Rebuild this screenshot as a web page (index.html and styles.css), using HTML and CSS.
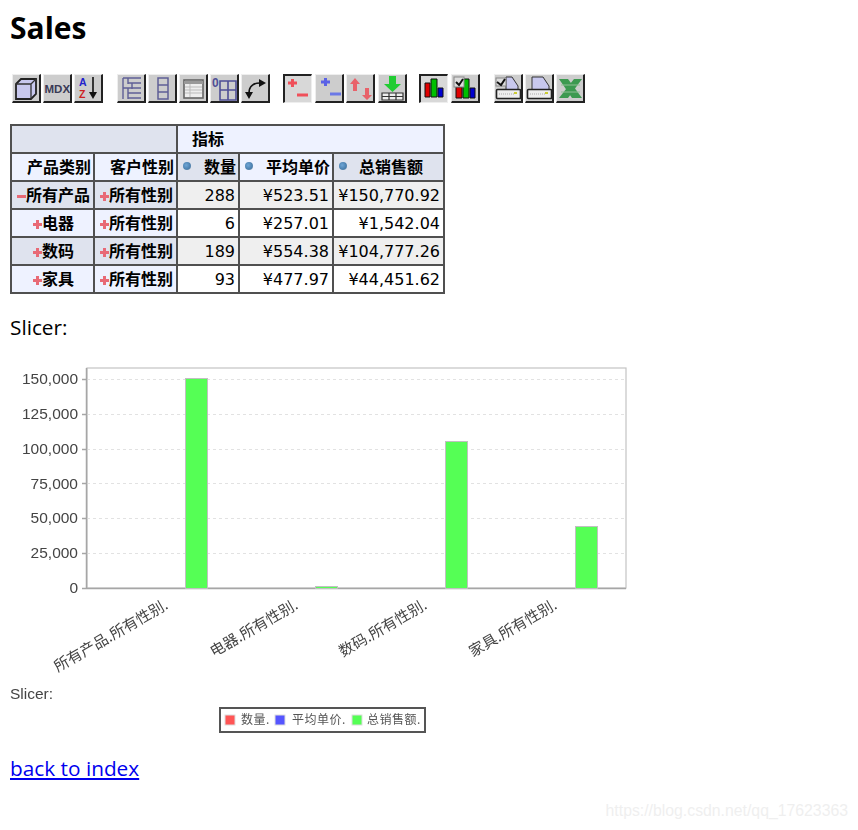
FILE: index.html
```html
<!DOCTYPE html>
<html lang="en">
<head>
    <meta charset="UTF-8">
    <title>Sales</title>
    <link rel="stylesheet" href="styles.css">
</head>
<body>
    <h1 class="title">Sales</h1>

    <!-- Toolbar -->
    <div class="toolbar">
        <div class="tool-group">
            <div class="tool"><svg viewBox="1 1 26 26"><path d="M4 10 9 5H24V20L19 25H4Z" fill="#c8c8ee" stroke="#222" stroke-width="1.8"/><path d="M4 10H19V25M19 10 24 5" fill="none" stroke="#333" stroke-width="1.3"/></svg></div>
            <div class="tool"><svg viewBox="1 1 26 26"><text class="tool-mdx" x="1.500" y="18.500">MDX</text></svg></div>
            <div class="tool"><svg viewBox="1 1 26 26"><text class="tool-az az-a" x="5" y="12">A</text><text class="tool-az az-z" x="5" y="24">Z</text><path d="M19 3V20" stroke="#111" stroke-width="1.6"/><path d="M15 18H23L19 25Z" fill="#111"/></svg></div>
        </div>
        <div class="tool-group step-right">
            <div class="tool"><svg viewBox="1 1 26 26"><path d="M6 4V25M6 4H24M11 4V10M11 9H24M15 9V15M15 14H24M6 14H15M11 14V25M11 19H24M11 24H24" fill="none" stroke="#5f5f96" stroke-width="1.4"/></svg></div>
            <div class="tool"><svg viewBox="1 1 26 26"><path d="M10 4H20V25H10ZM10 11H20M10 18H20" fill="none" stroke="#5f5f96" stroke-width="1.5"/></svg></div>
            <div class="tool"><svg viewBox="1 1 26 26"><rect x="5" y="6" width="19" height="18" fill="#eee" stroke="#666" stroke-width="1.6"/><path d="M5 7H24V10H5Z" fill="#999"/><path d="M6 13H23M6 16H23M6 19H23M11 10V23" stroke="#bbb"/></svg></div>
            <div class="tool"><svg viewBox="1 1 26 26"><text class="tool-zero" x="2" y="13">0</text><path d="M10 7H26V26H10ZM10 16H26M18 7V26" fill="none" stroke="#4f4f96" stroke-width="1.6"/></svg></div>
            <div class="tool"><svg viewBox="1 1 26 26"><path d="M8 19C8 12 13 9 19 9" fill="none" stroke="#111" stroke-width="1.7"/><path d="M18 5 25 9 18 13ZM4 18H12L8 25Z" fill="#111"/></svg></div>
        </div>
        <div class="tool-group loose">
            <div class="tool pressed"><svg viewBox="2 2 26 26"><path d="M5 9H14M9.500 5V13" stroke="#f0505a" stroke-width="3"/><path d="M14 21H25" stroke="#f0505a" stroke-width="3"/></svg></div>
            <div class="tool"><svg viewBox="1 1 26 26"><path d="M6 8H15M10.500 4V12" stroke="#5a62e6" stroke-width="3"/><path d="M15 20H26" stroke="#6a78e6" stroke-width="3"/></svg></div>
            <div class="tool"><svg viewBox="1 1 26 26"><path d="M9 4 14 10H11V17H7V10H4Z" fill="#e8626a"/><path d="M19 14H23V21H26L21 26 16 21H19Z" fill="#e8626a"/></svg></div>
            <div class="tool"><svg viewBox="1 1 26 26"><path d="M11 2H18V10H23L14.500 18 6 10H11Z" fill="#22cc33"/><path d="M4 19H25V26H4ZM4 22.500H25M11 19V26M18 19V26" fill="#eee" stroke="#333" stroke-width="1.2"/></svg></div>
        </div>
        <div class="tool-group charts">
            <div class="tool pressed"><svg viewBox="2 2 26 26"><path d="M6 9H11V23H6Z" fill="#e00000" stroke="#111"/><path d="M12 5H18V23H12Z" fill="#00c000" stroke="#111"/><path d="M19 14H24V23H19Z" fill="#0000d0" stroke="#111"/></svg></div>
            <div class="tool"><svg viewBox="1 1 26 26"><path d="M5 13H11V24H5Z" fill="#e00000" stroke="#111"/><path d="M12 5H18V24H12Z" fill="#00c000" stroke="#111"/><path d="M19 14H24V24H19Z" fill="#0000d0" stroke="#111"/><rect x="3" y="3" width="10" height="10" fill="#ddd" stroke="#888"/><path d="M5 8 8 11 12 5" fill="none" stroke="#111" stroke-width="2"/></svg></div>
        </div>
        <div class="tool-group step-right">
            <div class="tool"><svg viewBox="1 1 26 26"><path d="M12 3H18L24 12V19H12Z" fill="#c8c8ee" stroke="#333"/><rect x="2" y="4" width="10" height="8" fill="#ddd" stroke="#888"/><path d="M3 8 7 11 11 5" fill="none" stroke="#111" stroke-width="2"/><rect x="2.500" y="15.500" width="24" height="9" rx="1" fill="#eee" stroke="#222" stroke-width="1.6"/><path d="M5 20H20" stroke="#aaa" stroke-dasharray="1 1"/><rect x="20" y="18" width="3" height="2" fill="#cc3"/></svg></div>
            <div class="tool"><svg viewBox="1 1 26 26"><path d="M7 3H18L24 12V19H7Z" fill="#c8c8ee" stroke="#333"/><rect x="2.500" y="15.500" width="24" height="9" rx="1" fill="#eee" stroke="#222" stroke-width="1.6"/><path d="M5 20H20" stroke="#aaa" stroke-dasharray="1 1"/><rect x="20" y="18" width="3" height="2" fill="#cc3"/></svg></div>
            <div class="tool"><svg viewBox="1 1 26 26"><path d="M3 5H12L26 24H16Z" fill="#3c9a50"/><path d="M26 5H18L3 24H12Z" fill="#3c9a50"/><path d="M5 11H24M5 18H24" stroke="#8fbf95"/></svg></div>
        </div>
    </div>

    <!-- Pivot table -->
    <table class="pivot">
        <colgroup>
            <col class="col-category">
            <col class="col-gender">
            <col class="col-qty">
            <col class="col-price">
            <col class="col-total">
        </colgroup>
        <tr>
            <th class="corner" colspan="2"></th>
            <th class="measures" colspan="3">指标</th>
        </tr>
        <tr>
            <th class="dim-head">产品类别</th>
            <th class="dim-head">客户性别</th>
            <th class="measure odd"><div class="measure-inner"><span class="bullet"></span>数量</div></th>
            <th class="measure"><div class="measure-inner"><span class="bullet"></span>平均单价</div></th>
            <th class="measure odd"><div class="measure-inner wide"><span class="bullet"></span>总销售额</div></th>
        </tr>
        <tr class="row-odd">
            <th class="member"><span class="minus"></span>所有产品</th>
            <th class="member"><span class="plus"></span>所有性别</th>
            <td>288</td>
            <td>¥523.51</td>
            <td>¥150,770.92</td>
        </tr>
        <tr class="row-even">
            <th class="member"><span class="plus"></span>电器</th>
            <th class="member"><span class="plus"></span>所有性别</th>
            <td>6</td>
            <td>¥257.01</td>
            <td>¥1,542.04</td>
        </tr>
        <tr class="row-odd">
            <th class="member"><span class="plus"></span>数码</th>
            <th class="member"><span class="plus"></span>所有性别</th>
            <td>189</td>
            <td>¥554.38</td>
            <td>¥104,777.26</td>
        </tr>
        <tr class="row-even">
            <th class="member"><span class="plus"></span>家具</th>
            <th class="member"><span class="plus"></span>所有性别</th>
            <td>93</td>
            <td>¥477.97</td>
            <td>¥44,451.62</td>
        </tr>
    </table>

    <p class="slicer">Slicer:</p>

    <!-- Chart, viewBox uses page coordinates -->
    <svg class="chart" viewBox="10 355 630 385">
        <rect class="plot" x="87" y="368" width="539" height="220"/>
        <path class="grid" d="M87 379.500H626M87 414.500H626M87 449.500H626M87 483.500H626M87 518.500H626M87 553.500H626"/>
        <path class="axis" d="M86.500 368V588.500H626M82 379.500H87M82 414.500H87M82 449.500H87M82 483.500H87M82 518.500H87M82 553.500H87M82 588.500H87"/>
        <text class="tick" x="78" y="384">150,000</text>
        <text class="tick" x="78" y="419">125,000</text>
        <text class="tick" x="78" y="454">100,000</text>
        <text class="tick" x="78" y="489">75,000</text>
        <text class="tick" x="78" y="523">50,000</text>
        <text class="tick" x="78" y="558">25,000</text>
        <text class="tick" x="78" y="593">0</text>
        <rect class="bar" x="185.500" y="378.500" width="22" height="210"/>
        <rect class="bar" x="315.500" y="586.500" width="22" height="2"/>
        <rect class="bar" x="445.500" y="441.500" width="22" height="147"/>
        <rect class="bar" x="575.500" y="526.500" width="22" height="62"/>
        <text class="cat" transform="translate(169 608) rotate(-30)">所有产品.所有性别.</text>
        <text class="cat" transform="translate(299 608) rotate(-30)">电器.所有性别.</text>
        <text class="cat" transform="translate(428 608) rotate(-30)">数码.所有性别.</text>
        <text class="cat" transform="translate(558 608) rotate(-30)">家具.所有性别.</text>
        <text class="chart-slicer" x="10" y="699">Slicer:</text>
        <rect class="legend" x="220" y="708" width="205" height="24"/>
        <rect class="swatch-red" x="225" y="715" width="10" height="10"/>
        <text class="legend-text" x="241" y="724">数量.</text>
        <rect class="swatch-blue" x="275" y="715" width="10" height="10"/>
        <text class="legend-text" x="292" y="724">平均单价.</text>
        <rect class="swatch-green" x="352" y="715" width="10" height="10"/>
        <text class="legend-text" x="367" y="724">总销售额.</text>
    </svg>

    <a class="back" href="#">back to index</a>

    <div class="watermark">https://blog.csdn.net/qq_17623363</div>
</body>
</html>
```

FILE: styles.css
```css
html, body {
    height: 100%;
}
body {
    margin: 0;
    padding: 0 10px;
    box-sizing: border-box;
    position: relative;
    overflow: hidden;
    background-color: white;
    color: black;
    font-family: "Open Sans", "Noto Sans CJK SC", sans-serif;
}
.title {
    margin: 10px 0 0;
    font-size: 30px;
    line-height: 36px;
    font-weight: 700;
}

/* Toolbar */
.toolbar {
    display: flex;
    gap: 13px;
    margin: 28px 0 0 2px;
}
.tool-group {
    display: flex;
    gap: 2px;
}
.tool-group.step-right {
    margin-left: 1px;
}
.tool-group.loose {
    gap: 2.5px;
}
.tool-group.charts {
    gap: 3px;
    margin-left: -1px;
}
.tool {
    width: 29px;
    height: 29px;
    box-sizing: border-box;
    background-color: #cdcdcd;
    border-top: 1px solid #eee;
    border-left: 1px solid #eee;
    border-right: 2px solid #222;
    border-bottom: 2px solid #222;
}
.tool.pressed {
    border-top: 2px solid #222;
    border-left: 2px solid #222;
    border-right: 1px solid #eee;
    border-bottom: 1px solid #eee;
    background-color: #d8d8d8;
}
.tool svg {
    display: block;
    width: 100%;
    height: 100%;
}
.tool-mdx {
    font: bold 11.500px "Liberation Sans", sans-serif;
    fill: #3a3a55;
}
.tool-az {
    font: bold 10.500px "Liberation Sans", sans-serif;
}
.az-a {
    fill: #2222cc;
}
.az-z {
    fill: #cc2222;
}
.tool-zero {
    font: bold 12px "Liberation Sans", sans-serif;
    fill: #4f4f96;
}

/* Pivot table */
.pivot {
    margin-top: 21px;
    width: 433px;
    table-layout: fixed;
    border-collapse: collapse;
    font-family: "DejaVu Sans", "Noto Sans CJK SC", sans-serif;
    font-size: 16px;
}
.col-category {
    width: 83px;
}
.col-gender {
    width: 83px;
}
.col-qty {
    width: 62px;
}
.col-price {
    width: 94px;
}
.col-total {
    width: 111px;
}
.pivot tr {
    height: 28px;
}
.pivot th, .pivot td {
    border: 2px solid #505050;
    white-space: nowrap;
    line-height: 24px;
}
.pivot th {
    padding: 0 2px 2px 3px;
    font-family: "Noto Sans CJK SC", sans-serif;
    font-weight: 700;
}
.pivot td {
    padding: 2px 3px 0;
    text-align: right;
}
.corner {
    background-color: #dfe3ee;
}
.pivot .measures {
    padding-left: 14px;
    background-color: #eef2ff;
    text-align: left;
}
.dim-head {
    background-color: #eef2ff;
    text-align: right;
}
.measure {
    background-color: #eef2ff;
}
.measure.odd {
    background-color: #dfe3ee;
}
.measure-inner {
    display: flex;
    align-items: center;
    justify-content: flex-end;
    position: relative;
}
.measure-inner.wide {
    padding-right: 18px;
}
.bullet {
    position: absolute;
    left: 2px;
    top: 8px;
    width: 8px;
    height: 8px;
    border-radius: 50%;
    background: radial-gradient(circle at 40% 40%, #6fa6d6, #4a7fae 60%, #9aa6b0);
}
.member {
    text-align: center;
}
.row-odd .member {
    background-color: #dfe3ee;
}
.row-even .member {
    background-color: #eef2ff;
}
.row-odd td {
    background-color: #efefef;
}
.row-even td {
    background-color: white;
}
.plus, .minus {
    display: inline-block;
    position: relative;
    width: 10px;
    height: 10px;
    vertical-align: 0;
}
.plus::before, .minus::before {
    content: "";
    position: absolute;
    left: 1px;
    right: 0;
    top: 4px;
    height: 3px;
    background-color: #e86a76;
}
.plus::after {
    content: "";
    position: absolute;
    left: 4px;
    width: 3px;
    top: 1px;
    bottom: 0;
    background-color: #e86a76;
}

.slicer {
    margin: 19px 0 0;
    font-size: 20.800px;
    line-height: 28px;
}

/* Chart */
.chart {
    display: block;
    width: 630px;
    height: 385px;
    margin-top: 14px;
    filter: blur(0.45px);
}
.plot {
    fill: white;
    stroke: #c4c4c4;
    stroke-width: 1.2;
}
.grid {
    fill: none;
    stroke: #e2e2e2;
    stroke-dasharray: 3 3;
}
.axis {
    fill: none;
    stroke: #a6a6a6;
    stroke-width: 1.5;
}
.tick {
    font: 15.500px "Liberation Sans", sans-serif;
    fill: #444;
    text-anchor: end;
}
.bar {
    fill: #55ff55;
    stroke: #c0c0c0;
}
.cat {
    font: 15px "Noto Sans CJK SC", sans-serif;
    fill: #444;
    text-anchor: end;
}
.chart-slicer {
    font: 15.500px "Liberation Sans", sans-serif;
    fill: #444;
}
.legend {
    fill: white;
    stroke: #555;
    stroke-width: 2;
}
.swatch-red {
    fill: #ff5555;
    stroke: #ddd;
}
.swatch-blue {
    fill: #5555ff;
    stroke: #ddd;
}
.swatch-green {
    fill: #55ff55;
    stroke: #ddd;
}
.legend-text {
    font: 12px "Noto Sans CJK SC", sans-serif;
    letter-spacing: 0.5px;
    fill: #555;
}

.back {
    display: block;
    width: fit-content;
    margin-top: 14px;
    font-size: 20.800px;
    line-height: 28px;
    color: #0000ee;
}
.watermark {
    position: absolute;
    right: 10px;
    top: 802px;
    font: 15.800px "Liberation Sans", sans-serif;
    color: #efefef;
}
```
